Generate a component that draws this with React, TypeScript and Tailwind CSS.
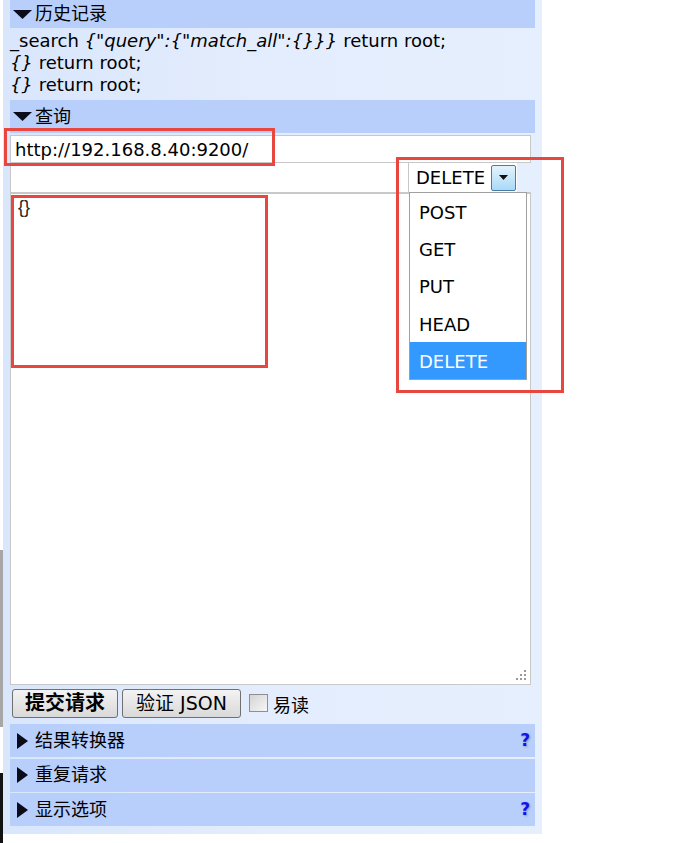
import React from 'react';

const methods = ['POST', 'GET', 'PUT', 'HEAD', 'DELETE'];

const footerBars = [
  { id: 1, title: '结果转换器', help: true },
  { id: 2, title: '重复请求', help: false },
  { id: 3, title: '显示选项', help: true },
];

const DownArrow = () => (
  <svg width="19" height="9" viewBox="0 0 19 9" className="block">
    <polygon points="0,0 19,0 9.5,9" fill="#0b0b1a" />
  </svg>
);

const RightArrow = () => (
  <svg width="11" height="16" viewBox="0 0 11 16" className="block">
    <polygon points="0,0 11,8 0,16" fill="#0b0b1a" />
  </svg>
);

const Help = () => (
  <span className="mr-[5px] ml-auto text-[17px] font-bold leading-none text-[#1414e6] [text-shadow:1px_1px_2px_#8a9ac8]">
    ?
  </span>
);

const RedBox = ({ className }: { className: string }) => (
  <div className={`pointer-events-none absolute border-[3px] border-[#e8473f] ${className}`} />
);

const App = () => {
  return (
    <div className="relative flex min-h-[843px] w-[675px] bg-white font-['DejaVu_Sans','Noto_Sans_CJK_SC',sans-serif] text-[18px] text-black">
      {/* stray window edge on the far left */}
      <div className="flex w-[3px] flex-col">
        <div className="h-[550px]" />
        <div className="h-[177px] bg-[#a6a6a6]" />
        <div className="h-[46px]" />
        <div className="h-[70px] bg-[#121212]" />
      </div>

      <div className="flex h-[834px] w-[539px] flex-col bg-gradient-to-r from-[#d9e6fc] via-[#e4edfd] to-[#e6effd] px-[7px]">
        {/* history */}
        <div className="flex h-[28px] w-[525px] items-center bg-[#b8cefb]">
          <span className="ml-[3px] w-[22px]">
            <DownArrow />
          </span>
          <span className="text-[18px] leading-none">历史记录</span>
        </div>
        <div className="flex h-[72px] flex-col pt-[2px] leading-[22px]">
          <div>
            _search <i>{'{"query":{"match_all":{}}}'}</i> return root;
          </div>
          <div>
            <i>{'{}'}</i> return root;
          </div>
          <div>
            <i>{'{}'}</i> return root;
          </div>
        </div>

        {/* query */}
        <div className="flex h-[33px] w-[525px] items-center bg-[#b8cefb]">
          <span className="ml-[3px] w-[22px]">
            <DownArrow />
          </span>
          <span className="text-[18px] leading-none">查询</span>
        </div>

        <div className="mt-[2px] flex h-[28px] w-[521px] items-center border border-[#c8c8c8] bg-white pl-[4px]">
          http://192.168.8.40:9200/
        </div>

        <div className="flex h-[29px] w-[521px]">
          <div className="w-[398px] border-l border-[#c8c8c8] bg-white" />
          <div className="flex w-[109px] items-center border-l border-[#c8c8c8] bg-white pl-[7px]">
            <span className="leading-none">DELETE</span>
            <div className="ml-auto mr-[1px] flex h-[26px] w-[25px] items-center justify-center rounded-[2px] border border-[#477ca6] bg-gradient-to-b from-[#e4f3fc] to-[#a9d9f6]">
              <svg width="9" height="5" viewBox="0 0 9 5">
                <polygon points="0,0 9,0 4.5,5" fill="#111" />
              </svg>
            </div>
          </div>
        </div>

        <div className="relative h-[493px] w-[521px] border border-t-2 border-[#c8c8c8] bg-white">
          <div className="pl-[7px] pt-[2px] font-['Liberation_Sans',sans-serif] text-[18px] leading-[22px] text-[#222]">{'{}'}</div>
          <svg width="11" height="11" viewBox="0 0 11 11" className="absolute right-[3px] bottom-[3px]">
            <rect x="8" y="0" width="2" height="2" fill="#9a9a9a" />
            <rect x="4" y="4" width="2" height="2" fill="#9a9a9a" />
            <rect x="8" y="4" width="2" height="2" fill="#9a9a9a" />
            <rect x="0" y="8" width="2" height="2" fill="#9a9a9a" />
            <rect x="4" y="8" width="2" height="2" fill="#9a9a9a" />
            <rect x="8" y="8" width="2" height="2" fill="#9a9a9a" />
          </svg>
        </div>

        {/* actions */}
        <div className="mt-[3px] ml-[2px] flex h-[30px] items-center gap-[4px]">
          <button className="flex h-[29px] w-[106px] items-center justify-center rounded-[3px] border border-[#707070] bg-gradient-to-b from-[#f3f3f3] to-[#d9d9d9] text-[20px] font-bold">
            提交请求
          </button>
          <button className="flex h-[29px] w-[119px] items-center justify-center rounded-[3px] border border-[#707070] bg-gradient-to-b from-[#f3f3f3] to-[#d9d9d9] text-[19px]">
            验证 JSON
          </button>
          <div className="ml-[4px] h-[18px] w-[19px] border border-[#8e8f8f] bg-gradient-to-br from-[#d4d4d4] to-[#f6f6f6]" />
          <span className="ml-[1px] mt-[4px] text-[18px]">易读</span>
        </div>

        <div className="mt-[6px] flex flex-col gap-[1.5px]">
          {footerBars.map((bar) => (
            <div key={bar.id} className="flex h-[33px] w-[525px] items-center bg-[#b8cefb]">
              <span className="ml-[7px] w-[18px]">
                <RightArrow />
              </span>
              <span className="text-[18px] leading-none">{bar.title}</span>
              {bar.help && <Help />}
            </div>
          ))}
        </div>
      </div>

      {/* open method dropdown */}
      <div className="absolute top-[192px] left-[409px] flex w-[118px] flex-col border border-[#a0a0a0] bg-white">
        {methods.map((m) => (
          <div
            key={m}
            className={`flex h-[37.2px] items-center pt-[2px] pl-[9px] ${m === 'DELETE' ? 'bg-[#3399ff] text-white' : ''}`}
          >
            {m}
          </div>
        ))}
      </div>

      {/* annotation boxes */}
      <RedBox className="top-[128px] left-[4px] h-[38px] w-[271px]" />
      <RedBox className="top-[195px] left-[11px] h-[173px] w-[257px]" />
      <RedBox className="top-[157px] left-[396px] h-[236px] w-[168px]" />
    </div>
  );
};

export default App;
